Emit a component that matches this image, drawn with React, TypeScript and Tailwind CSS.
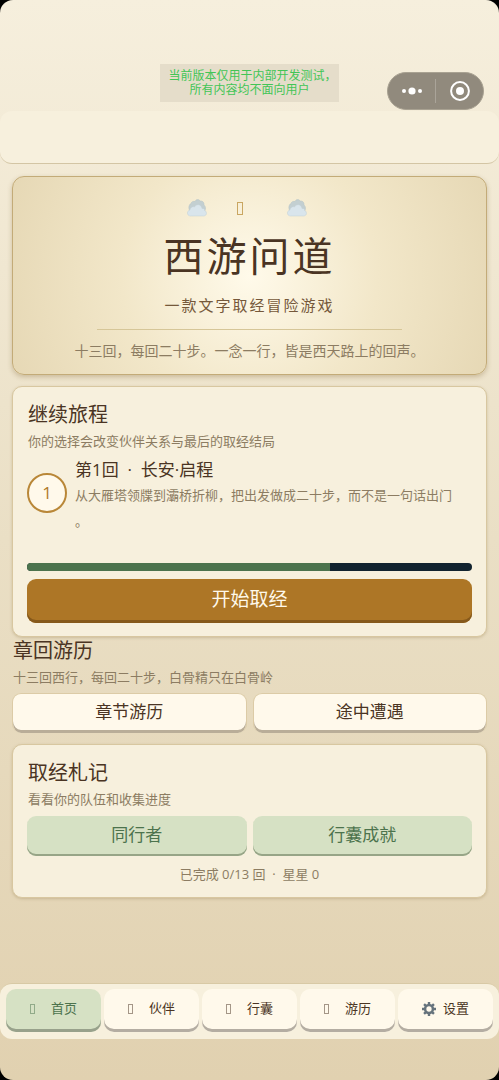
import type { ReactNode } from "react";

function Cloud() {
  return (
    <svg viewBox="0 0 40 36" className="h-[18px] w-5" aria-hidden="true">
      <path
        d="M7 25C2 21 3 11 8 9c1-4 5-5 8-4 2-5 8-5 10-1 5-1 9 3 8 8 4 3 4 10 0 14z"
        fill="#c3cfd1"
        stroke="#b5c2c4"
      />
      <path
        d="M7 34c-8 0-8-11-1-12 0-5 6-8 9-6 3-7 14-6 15 3 4-1 6 2 5 4 6 2 5 11-2 11z"
        fill="#d9e5ec"
        stroke="#c3d0d6"
      />
    </svg>
  );
}

function Gear() {
  return (
    <svg viewBox="0 0 28 28" className="size-[14px]" aria-hidden="true">
      <g fill="none" stroke="#66737c">
        <circle cx="14" cy="14" r="7.8" strokeWidth="5" />
        <path
          strokeWidth="4.8"
          d="M14 0v6M14 22v6M0 14h6M22 14h6M4.1 4.1l4.2 4.2M19.7 19.7l4.2 4.2M4.1 23.9l4.2-4.2M19.7 8.3l4.2-4.2"
        />
      </g>
    </svg>
  );
}

function SectionTitle({ title, note }: { title: string; note: string }) {
  return (
    <div className="px-px">
      <h2 className="text-[20px] leading-7 text-[#4a3423]">{title}</h2>
      <p className="mt-[2px] text-[13px] leading-5 text-[#8c7c62]">{note}</p>
    </div>
  );
}

function Card({ children }: { children: ReactNode }) {
  return (
    <section className="mt-[11px] rounded-[10px] border border-[#d8c7a0] bg-[#f7f0dd] px-[14px] pt-[14px] pb-[13px] shadow-[0_1px_3px_rgba(120,90,40,0.25)]">
      {children}
    </section>
  );
}

function LightButton({ children }: { children: ReactNode }) {
  return (
    <button
      type="button"
      className="h-10 rounded-[9px] border border-b-0 border-[#dccba6] bg-[#fff9eb] pb-[3px] text-[17px] text-[#4a3423] shadow-[inset_0_-3px_0_#b9ad98]"
    >
      {children}
    </button>
  );
}

function GreenButton({ children }: { children: ReactNode }) {
  return (
    <button
      type="button"
      className="h-10 rounded-[9px] bg-[#d6e1c4] pb-[3px] text-[17px] text-[#4c734d] shadow-[inset_0_-2px_0_#97a587]"
    >
      {children}
    </button>
  );
}

const tabs = ["首页", "伙伴", "行囊", "游历", "设置"];

export default function App() {
  return (
    <div className="min-h-screen bg-black font-['Open_Sans','Noto_Sans_CJK_SC',sans-serif]">
      <div className="flex min-h-screen flex-col rounded-[13px] bg-linear-to-b from-[#f6efdd] via-[#eadfc5] to-[#e1d1b0]">
        <div className="grid grid-cols-[1fr_auto_1fr] items-start pt-16">
          <p className="col-start-2 bg-[#e5ddca] px-2 py-[5px] text-center text-[12px] leading-[14px] text-[#42c556] [font-feature-settings:'halt']">
            当前版本仅用于内部开发测试，
            <br />
            所有内容均不面向用户
          </p>
          <div className="mt-2 mr-[15px] flex h-[38px] w-[97px] items-center justify-self-end rounded-full border border-[#a9a292] bg-[#918a7d]">
            <button type="button" aria-label="更多" className="flex flex-1 justify-center">
              <svg viewBox="0 0 20 8" className="h-2 w-5" fill="#fff">
                <circle cx="2" cy="4" r="2" />
                <circle cx="10" cy="4" r="3.6" />
                <circle cx="18" cy="4" r="2" />
              </svg>
            </button>
            <span className="h-6 w-px bg-[#aaa499]" />
            <button type="button" aria-label="关闭" className="flex flex-1 justify-center">
              <svg viewBox="0 0 20 20" className="size-5">
                <circle cx="10" cy="10" r="8.9" fill="none" stroke="#fff" strokeWidth="2" />
                <circle cx="10" cy="10" r="4" fill="#fff" />
              </svg>
            </button>
          </div>
        </div>

        <header className="mt-px h-[53px] rounded-xl border-b border-[#d3c5a4] bg-[#f7f0dd]" />

        <main className="px-3 pt-3">
          <section className="flex flex-col items-center rounded-xl border border-[#c3ab78] bg-[radial-gradient(circle_at_center,#fffaea_0%,#f2e7c9_50%,#e6d8b5_100%)] px-3 pt-[21px] pb-3 text-center shadow-[0_2px_5px_rgba(120,90,40,0.3)]">
            <div className="flex h-5 items-center gap-[30px] pr-[6px]">
              <Cloud />
              <span className="flex w-5">
                <span className="h-[13px] w-[6px] border border-[#c9a661]" />
              </span>
              <Cloud />
            </div>
            <h1 className="mt-[14px] text-[40px] leading-[48px] tracking-[3px] text-[#4a3423]">
              西游问道
            </h1>
            <p className="mt-[13px] text-[15px] leading-6 tracking-[2px] text-[#75583a]">
              一款文字取经冒险游戏
            </p>
            <div className="mt-3 h-px w-[68%] bg-[#d6c698]" />
            <p className="mt-[10px] text-[14px] leading-[22px] text-[#8c7c62]">
              十三回，每回二十步。一念一行，皆是西天路上的回声。
            </p>
          </section>

          <Card>
            <SectionTitle title="继续旅程" note="你的选择会改变伙伴关系与最后的取经结局" />
            <div className="mt-[7px] flex items-start gap-2">
              <span className="mt-[15px] flex size-10 shrink-0 items-center justify-center rounded-full border-2 border-[#b98738] bg-[#fff9eb] text-[17px] text-[#b07a2a]">
                1
              </span>
              <div>
                <h3 className="text-[17px] leading-6 whitespace-pre text-[#4a3423]">{"第1回  ·  长安·启程"}</h3>
                <p className="text-[13px] leading-[26px] text-[#8c7c62]">
                  从大雁塔领牒到灞桥折柳，把出发做成二十步，而不是一句话出门
                  <br />。
                </p>
              </div>
            </div>
            <div
              role="progressbar"
              aria-label="旅程进度"
              aria-valuenow={68}
              className="mt-[29px] h-2 overflow-hidden rounded-full bg-[#12232f]"
            >
              <div className="h-full w-[68%] bg-[#4c734d]" />
            </div>
            <button
              type="button"
              className="mt-2 block h-11 w-full rounded-[9px] bg-[#ad7626] pb-[3px] text-[19px] text-[#fff9eb] shadow-[inset_0_-3px_0_#86591b]"
            >
              开始取经
            </button>
          </Card>

          <section>
            <SectionTitle title="章回游历" note="十三回西行，每回二十步，白骨精只在白骨岭" />
            <div className="mt-[6px] grid grid-cols-2 gap-[6px]">
              <LightButton>章节游历</LightButton>
              <LightButton>途中遭遇</LightButton>
            </div>
          </section>

          <Card>
            <SectionTitle title="取经札记" note="看看你的队伍和收集进度" />
            <div className="mt-[7px] grid grid-cols-2 gap-[6px]">
              <GreenButton>同行者</GreenButton>
              <GreenButton>行囊成就</GreenButton>
            </div>
            <p className="mt-2 text-center text-[13px] leading-5 whitespace-pre text-[#8c7c62]">
              {"已完成 0/13 回  ·  星星 0"}
            </p>
          </Card>
        </main>

        <nav className="mt-auto mb-[41px] grid grid-cols-5 gap-[3px] rounded-xl border-t border-[#d8c9a5] bg-[#f7f0dd] px-[6px] pt-[5px] pb-[7px]">
          {tabs.map((name, i) => (
            <button
              key={name}
              type="button"
              aria-current={i === 0 ? "page" : undefined}
              className={
                i === 0
                  ? "flex h-[43px] items-center justify-center gap-[7px] rounded-[10px] bg-[#d6e1c4] pb-[3px] text-[13px] text-[#4c734d] shadow-[inset_0_-3px_0_#98a18b]"
                  : "flex h-[43px] items-center justify-center gap-[7px] rounded-[10px] bg-[#fff9eb] pb-[3px] text-[13px] text-[#4a3423] shadow-[inset_0_-3px_0_#b4ada2]"
              }
            >
              <span className="flex w-[14px]">
                {name === "设置" ? (
                  <Gear />
                ) : (
                  <span className="h-[10px] w-[5px] border border-current opacity-50" />
                )}
              </span>
              {name}
            </button>
          ))}
        </nav>
      </div>
    </div>
  );
}
